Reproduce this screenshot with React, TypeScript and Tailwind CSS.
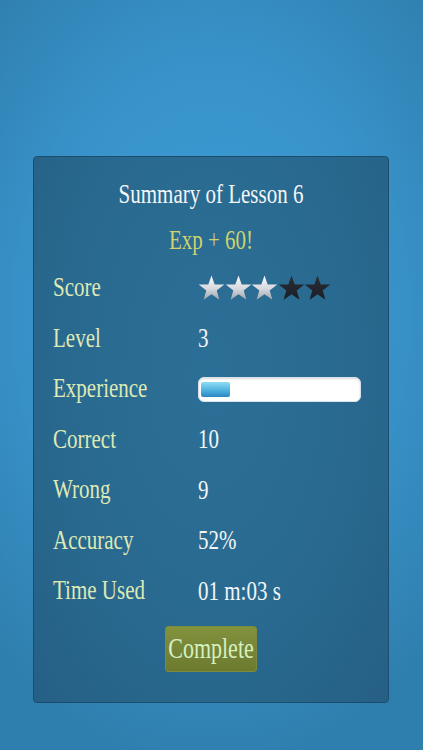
import React from 'react';

const serif = "font-['Liberation_Serif','Times_New_Roman',serif]";

function Star({ filled }: { filled: boolean }) {
  const id = filled ? 'silver' : 'dark';
  return (
    <svg width="27" height="26" viewBox="0 0 27 26" className="-mr-[0.5px]">
      <defs>
        <linearGradient id="silver" x1="0" y1="0" x2="0" y2="1">
          <stop offset="0" stopColor="#fbfbfd" />
          <stop offset="0.55" stopColor="#d6d8de" />
          <stop offset="1" stopColor="#9ea3ad" />
        </linearGradient>
        <linearGradient id="dark" x1="0" y1="0" x2="0" y2="1">
          <stop offset="0" stopColor="#2a2e36" />
          <stop offset="1" stopColor="#1a1d24" />
        </linearGradient>
      </defs>
      <path
        d="M13.5 0.5 L16.7 9.4 L26.3 9.6 L18.7 15.4 L21.4 24.8 L13.5 19.2 L5.6 24.8 L8.3 15.4 L0.7 9.6 L10.3 9.4 Z"
        fill={`url(#${id})`}
      />
    </svg>
  );
}

function Row({ label, children }: { label: string; children: React.ReactNode }) {
  return (
    <div className="flex items-center h-[50.5px]">
      <div className="w-[164px] pl-[19px]">
        <span className={`${serif} inline-block text-[21px] leading-none text-[#dfe9b4] scale-y-[1.3] origin-center`}>
          {label}
        </span>
      </div>
      <div className="flex items-center">{children}</div>
    </div>
  );
}

function Value({ text }: { text: string }) {
  return (
    <span className={`${serif} inline-block text-[21px] leading-none text-[#f2f6f8] scale-y-[1.3] origin-center`}>
      {text}
    </span>
  );
}

export default function App() {
  const stars = 3;
  return (
    <div className="w-[423px] h-[750px] overflow-hidden bg-[radial-gradient(ellipse_75%_60%_at_50%_42%,#3d9dd5_0%,#3893ca_55%,#2f7fae_100%)] pt-[156px] pl-[33px]">
      <div className="w-[356px] h-[547px] rounded-[4px] border border-[#1d4d6c] bg-[radial-gradient(ellipse_at_50%_40%,#2c6f96_0%,#29698f_60%,#265f85_100%)] pt-[14px]">
        <div className="h-[46px] flex items-center justify-center">
          <span className={`${serif} inline-block text-[21px] leading-none text-[#f4f6f8] scale-y-[1.3]`}>
            Summary of Lesson 6
          </span>
        </div>
        <div className="h-[46px] flex items-center justify-center">
          <span className={`${serif} inline-block text-[21px] leading-none text-[#cdd36e] scale-y-[1.3]`}>
            Exp + 60!
          </span>
        </div>

        <Row label="Score">
          <div className="flex items-center">
            {[0, 1, 2, 3, 4].map((i) => (
              <Star key={i} filled={i < stars} />
            ))}
          </div>
        </Row>
        <Row label="Level">
          <Value text="3" />
        </Row>
        <Row label="Experience">
          <div className="w-[163px] h-[25px] rounded-[6px] bg-white border border-[#d8e2ea] flex items-center pl-[2px] shadow-[inset_0_1px_2px_rgba(0,0,0,0.15)]">
            <div className="w-[29px] h-[15px] rounded-[2px] bg-[linear-gradient(#8fdcf2,#4fb3e0_55%,#2b86c2)]" />
          </div>
        </Row>
        <Row label="Correct">
          <Value text="10" />
        </Row>
        <Row label="Wrong">
          <Value text="9" />
        </Row>
        <Row label="Accuracy">
          <Value text="52%" />
        </Row>
        <Row label="Time Used">
          <Value text="01 m:03 s" />
        </Row>

        <div className="flex justify-center mt-[9px]">
          <button className="w-[92px] h-[46px] rounded-[3px] bg-[linear-gradient(#82923d,#6b7a2e)] border border-[#7c8c3c] flex items-center justify-center">
            <span className={`${serif} inline-block text-[22px] leading-none text-[#d6f0c2] scale-y-[1.3]`}>
              Complete
            </span>
          </button>
        </div>
      </div>
    </div>
  );
}
